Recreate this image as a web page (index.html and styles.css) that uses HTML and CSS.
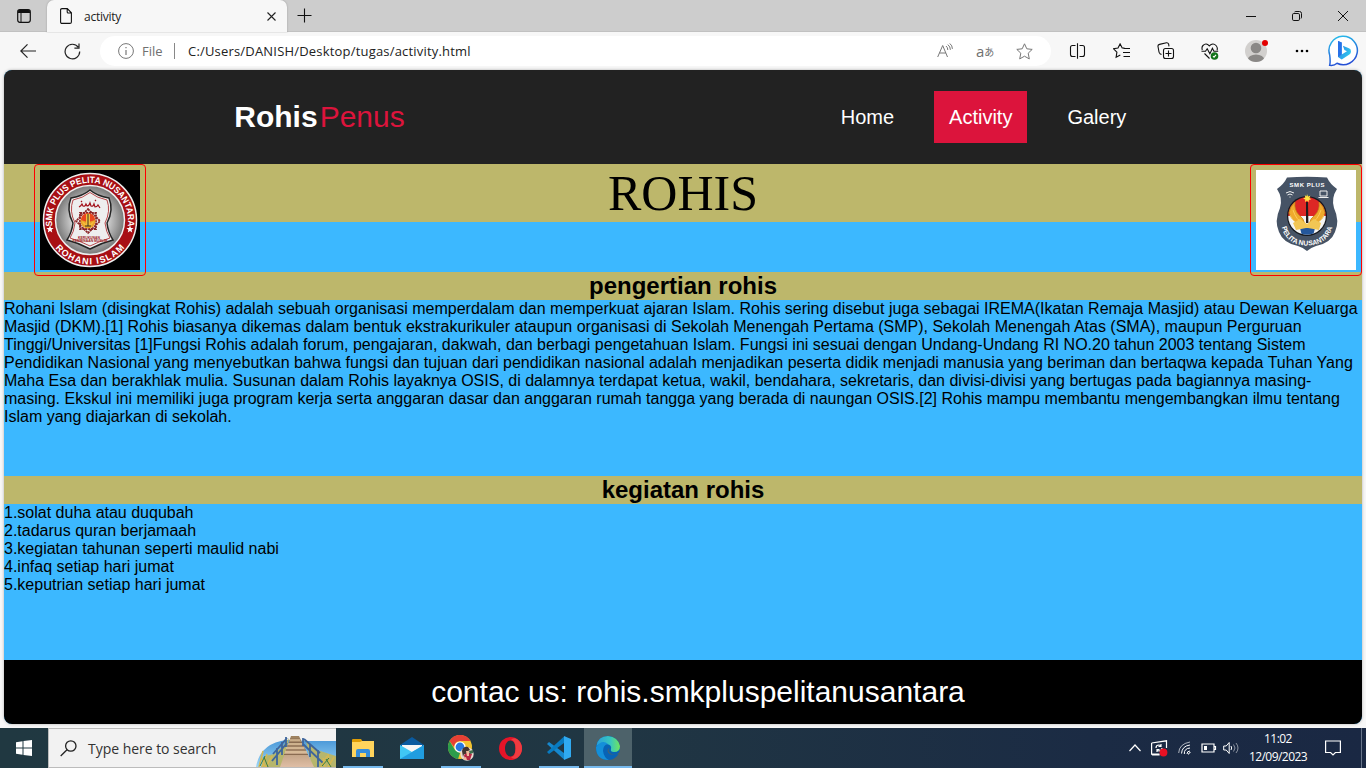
FILE: index.html
```html
<!DOCTYPE html>
<html lang="id">
<head>
<meta charset="utf-8">
<title>activity</title>
<link rel="stylesheet" href="styles.css">
</head>
<body>
<div class="screen">
  <div class="titlebar">
    <svg class="tab-menu" width="14" height="14" viewBox="0 0 14 14"><rect x=".7" y=".7" width="12.6" height="12.6" rx="2.2" fill="none" stroke="#111" stroke-width="1.2"/><path d="M1 4V2.5Q1 1 2.500 1h9Q13 1 13 2.500V4z" fill="#111"/><path d="M4 4v9" stroke="#111"/></svg>
    <div class="tab">
      <svg width="12" height="16" viewBox="0 0 12 16" fill="none" stroke="#111" stroke-width="1.1"><path d="M2 .6h5.300l4.100 4.200v9.100q0 1.500-1.500 1.500H2q-1.400 0-1.400-1.500V2Q.6.6 2 .6zM7.200.8v3.100q0 1.100 1.100 1.100h3"/></svg>
      <span class="tab-title">activity</span>
      <svg width="9" height="9" viewBox="0 0 9 9" stroke="#222" stroke-width="1.1"><path d="M.5.5l8 8M8.500.5l-8 8"/></svg>
    </div>
    <svg class="new-tab" width="15" height="15" viewBox="0 0 15 15" stroke="#111" stroke-width="1.1"><path d="M7.500.5v14M.5 7.500h14"/></svg>
    <div class="window-buttons">
      <svg width="10" height="10" viewBox="0 0 10 10" stroke="#111"><path d="M0 5.500h10"/></svg>
      <svg width="10" height="10" viewBox="0 0 10 10" fill="none" stroke="#111"><rect x=".5" y="2.500" width="7" height="7" rx="1.300"/><path d="M2.500 1Q3 .5 4 .5h3.500Q9.500.5 9.500 2.500V6Q9.500 7 9 7.500"/></svg>
      <svg width="10" height="10" viewBox="0 0 10 10" stroke="#111"><path d="M0 0l10 10M10 0L0 10"/></svg>
    </div>
  </div>

  <div class="toolbar">
    <svg class="back" width="16" height="14" viewBox="0 0 16 14" fill="none" stroke="#222" stroke-width="1.2"><path d="M16 7H.8M7.500.4L.8 7l6.700 6.600"/></svg>
    <svg class="reload" width="17" height="17" viewBox="0 0 17 17" fill="none" stroke="#222" stroke-width="1.2"><path d="M14.200 4.100A7.300 7.300 0 1 0 15.700 8.500M15 .5v4.600h-4.600"/></svg>
    <div class="address">
      <svg width="16" height="16" viewBox="0 0 16 16" fill="none" stroke="#777"><circle cx="8" cy="8" r="7.400"/><path d="M8 7v5M8 4v1.300" stroke-width="1.200"/></svg>
      <span class="scheme">File</span>
      <span class="divider"></span>
      <span class="url">C:/Users/DANISH/Desktop/tugas/activity.html</span>
      <svg class="read" width="17" height="16" viewBox="0 0 17 16" fill="none" stroke="#777"><path d="M.7 14L5.700 2.500l4.800 11.500M2.500 10h6.300M9 3q1.800 1.300 1.800 4M10.800 1.600q2.600 2 2.600 5.200M12.800.5q2.600 2 2.600 5.400"/></svg>
      <span class="translate">a<span>あ</span></span>
      <svg class="star" width="17" height="17" viewBox="0 0 17 17" fill="none" stroke="#777" stroke-linejoin="round"><path d="M8.500.8l2.300 5 5.400.6-4 3.800 1.100 5.700-4.800-2.700-4.800 2.700 1.100-5.700-4-3.800 5.400-.6z"/></svg>
    </div>
    <div class="tools">
      <svg width="18" height="16" viewBox="0 0 18 16" fill="none" stroke="#111" stroke-width="1.100"><path d="M6.500 2.500h-3Q1.500 2.500 1.500 4.500v7q0 2 2 2h3M10.500 2.500h3Q15.500 2.500 15.500 4.500v7q0 2-2 2h-3M8.500.3v15.400"/></svg>
      <svg width="18" height="16" viewBox="0 0 18 16" fill="none" stroke="#111" stroke-width="1.100"><path d="M11.500 5H9.200L7.100.9 5 5.100l-4.400.7 3.300 3.300-.8 5.200 4.200-2.200M10.500 5.500H17M10 9.500h7M10.500 13.500H17"/></svg>
      <svg width="18" height="18" viewBox="0 0 18 18" fill="none" stroke="#111" stroke-width="1.100"><rect x="6.500" y="6.500" width="10" height="10" rx="2"/><path d="M11.500 8.500v6M8.500 11.500h6M4.500 12.500L3 11.700Q2.200 11 2 10L1 4.500Q.7 2.800 2.500 2.400L9.500.8Q11 .6 11.600 2L12 4.300"/></svg>
      <svg width="18" height="17" viewBox="0 0 18 17" fill="none" stroke="#111" stroke-width="1.100"><path d="M1.300 7Q.4 4.200 2 2.500q3.100-3.100 6.300.4Q12-.8 15 2.500q2 2.200 1 4.800M.5 8.300h4l1.700-2.600 2.700 5 2.500-5.500 1.500 3.100h4.300M3.500 10.500l5 5"/><circle cx="13.500" cy="13" r="3.800" fill="#14751b" stroke="none"/><path d="M12 13.200l1 .9 2-2.300" stroke="#fff"/></svg>
      <svg class="profile" width="24" height="24" viewBox="0 0 24 24"><defs><clipPath id="avatar"><circle cx="11" cy="13" r="11"/></clipPath></defs><g clip-path="url(#avatar)"><path fill="#d2d0ce" d="M0 0h24v24H0z"/><circle cx="11" cy="10" r="5.300" fill="#8a8886"/><ellipse cx="11" cy="22" rx="8.300" ry="5.500" fill="#8a8886"/></g><circle cx="20" cy="5" r="3" fill="#e30000"/></svg>
      <svg width="14" height="4" viewBox="0 0 14 4"><circle cx="2" cy="2" r="1.300"/><circle cx="7" cy="2" r="1.300"/><circle cx="12" cy="2" r="1.300"/></svg>
    </div>
    <svg class="bing" width="32" height="32" viewBox="0 0 32 32"><defs><linearGradient id="bb" x1="0" y1="0" x2=".3" y2="1"><stop stop-color="#27c4ec"/><stop offset="1" stop-color="#254fd5"/></linearGradient><linearGradient id="bg" x1="0" y1="0" x2="1" y2=".6"><stop stop-color="#2878e4"/><stop offset="1" stop-color="#32c8ed"/></linearGradient></defs><path d="M1.700 30.300Q2.600 27 1.700 20A14.200 14.200 0 1 1 9 28.300Q6 31 1.700 30.300z" fill="#fff" stroke="url(#bb)" stroke-width="1.500"/><path d="M10 6l3.700 1.400v12.200l5.300-3.300-2.600-1.300-1.500-4.300 6 2.500Q23 13.800 23 16.400q0 2.100-1.600 3.200l-7.700 5L10 22z" fill="url(#bg)"/><path d="M10 6l3.700 1.400v12.200L10 22z" fill="#2871e8"/></svg>
  </div>

  <main class="page">
    <header class="site-header">
      <div class="brand"><b>Rohis</b><span>Penus</span></div>
      <nav><a>Home</a><a class="active">Activity</a><a>Galery</a></nav>
    </header>
    <section class="content">
      <h1>ROHIS</h1>
      <svg class="emblem emblem-left" width="112" height="112" viewBox="-5 -5 110 110">
        <defs>
          <radialGradient id="silver"><stop offset=".35" stop-color="#eee"/><stop offset="1" stop-color="#777"/></radialGradient>
          <path id="arcTop" d="M12.500 57A38 38 0 1 1 87.500 57"/>
          <path id="arcBottom" d="M12 73A44.500 44.500 0 0 0 88 73"/>
        </defs>
        <path d="M0 0h100v100H0z"/>
        <circle cx="50" cy="50" r="46.500" fill="#a80f14" stroke="#eee" stroke-width="1.500"/>
        <circle cx="50" cy="50" r="34.500" fill="url(#silver)" stroke="#eee" stroke-width="1.500"/>
        <path d="M50 20Q57 26 69 28Q74 40 67 53Q68 62 73 70Q61 73 50 79Q39 73 27 70Q32 62 33 53Q26 40 31 28Q43 26 50 20z" fill="#eee" stroke="#242424" stroke-width="1.500"/>
        <path d="M50 22.500Q57 28 67 30Q71 41 65 53Q66 62 70 68Q60 71 50 76Q40 71 30 68Q34 62 35 53Q29 41 33 30Q43 28 50 22.500z" fill="none" stroke="#aa2023" stroke-width=".8"/>
        <path d="M39 37q2-1 3-3l1 2q2 1 3-2l1 2q2 0 3-3l1 3q2 1 3-2l1 3q2 0 3-2l2 3M41 31l1 1M55 30l1 1" fill="none" stroke="#a20e18" stroke-width="1.200"/>
        <g transform="translate(48 51)"><path d="M-8-8H8V8H-8zM0-12L12 0 0 12-12 0z" fill="none" stroke="#8b2528" stroke-width="1.800" stroke-dasharray="2.200 .7"/><path d="M-6-6H6V6H-6z" fill="#d7b9b4"/><circle r="7.500" fill="#e9a22a"/><path d="M-7-1A7 7 0 0 1 7-1L1 1 0-9-1 1z" fill="#e94520"/><path d="M-6 0Q-5 5 0 5T6 0L2 3V-7H-2V3z" fill="#f5be3e"/><path d="M0-7V5M-3 5h6" stroke="#332" stroke-width="1"/></g>
        <text x="49" y="68.500" class="seal-small">KERUKUNAN</text><text x="50" y="72" class="seal-small">PEMBINAAN MUSLIM</text>
        <text class="seal-text" fill="#fff"><textPath href="#arcTop" startOffset="50%" text-anchor="middle" textLength="130" lengthAdjust="spacingAndGlyphs">SMK PLUS PELITA NUSANTARA</textPath></text>
        <text class="seal-text" fill="#fff"><textPath href="#arcBottom" startOffset="50%" text-anchor="middle" textLength="79" lengthAdjust="spacing">ROHANI ISLAM</textPath></text>
        <path id="whiteStar" d="M10 55.500l1 2.400 2.600.2-2 1.700.6 2.600-2.200-1.400-2.200 1.400.6-2.600-2-1.700 2.600-.2z" fill="#fff"/>
        <use href="#whiteStar" x="80"/>
      </svg>
      <svg class="emblem emblem-right" width="112" height="112" viewBox="-5 -5 110 110">
        <defs><clipPath id="disc"><circle cx="51" cy="46" r="18.800"/></clipPath><path id="shieldArc" d="M25 54Q29 75.500 51 75.500T77 54"/></defs>
        <path d="M0 0h100v100H0z" fill="#fff"/>
        <path d="M31 7.500Q51 6 71 7.500Q74 14 81 19Q75 28 78 38Q84 51 79 62Q75 73 60 76Q54 78 51 81Q48 78 42 76Q27 73 23 62Q18 51 24 38Q27 28 21 19Q28 14 31 7.500z" fill="#465365"/>
        <text x="51" y="17" text-anchor="middle" textLength="35" class="shield-top">SMK PLUS</text>
        <g fill="none" stroke="#eee" stroke-width="1"><path d="M30 23q4-3 8 0M31.500 25q2.500-2 5 0M33.500 27h1M64 21h7v5h-7zM62.500 27.500h10"/></g>
        <circle cx="51" cy="46" r="20" fill="#16191f"/>
        <g clip-path="url(#disc)"><path d="M30 25h42v21H30z" fill="#dd2725"/><path d="M30 46h42v22H30z" fill="#f4f4f4"/><path d="M44 58h15l-2 8H46z" fill="#24579b"/></g>
        <path d="M49 55Q37 54 33 43Q34 36 39 32Q38 40 43 45Q48 48 49 55zM53 55Q65 54 69 43Q68 36 63 32Q64 40 59 45Q54 48 53 55z" fill="#efaa2c" stroke="#bd7f19" stroke-width=".7"/>
        <path d="M34 45q4 10 16 10M68 45q-4 10-16 10M37 40q3 10 11 14M65 40q-3 10-11 14" fill="none" stroke="#ffd464" stroke-width=".8"/>
        <path d="M37 53l7-4 7 5 7-5 7 4-2 7-11-2-2 0-10 2z" fill="#f2c654"/>
        <path d="M50 32h2l.4 21H50z" fill="#211b1b"/><path d="M51 24l1 2.400 2.400-.6-1 2.200 2 1.300-2.600.6-.2 2.300-1.600-1.600-2 1.300.3-2.500-2.300-.9 2.300-1-.5-2.200 1.800 1z" fill="#ffe443"/>
        <text class="shield-text" fill="#fff"><textPath href="#shieldArc" startOffset="50%" text-anchor="middle" textLength="68" lengthAdjust="spacingAndGlyphs">PELITA NUSANTARA</textPath></text>
      </svg>
      <h2>pengertian rohis</h2>
      <p class="about">Rohani Islam (disingkat Rohis) adalah sebuah organisasi memperdalam dan memperkuat ajaran Islam. Rohis sering disebut juga sebagai IREMA(Ikatan Remaja Masjid) atau Dewan Keluarga<br>Masjid (DKM).[1] Rohis biasanya dikemas dalam bentuk ekstrakurikuler ataupun organisasi di Sekolah Menengah Pertama (SMP), Sekolah Menengah Atas (SMA), maupun Perguruan<br>Tinggi/Universitas [1]Fungsi Rohis adalah forum, pengajaran, dakwah, dan berbagi pengetahuan Islam. Fungsi ini sesuai dengan Undang-Undang RI NO.20 tahun 2003 tentang Sistem<br>Pendidikan Nasional yang menyebutkan bahwa fungsi dan tujuan dari pendidikan nasional adalah menjadikan peserta didik menjadi manusia yang beriman dan bertaqwa kepada Tuhan Yang<br>Maha Esa dan berakhlak mulia. Susunan dalam Rohis layaknya OSIS, di dalamnya terdapat ketua, wakil, bendahara, sekretaris, dan divisi-divisi yang bertugas pada bagiannya masing-<br>masing. Ekskul ini memiliki juga program kerja serta anggaran dasar dan anggaran rumah tangga yang berada di naungan OSIS.[2] Rohis mampu membantu mengembangkan ilmu tentang<br>Islam yang diajarkan di sekolah.</p>
      <h2>kegiatan rohis</h2>
      <p class="activities">1.solat duha atau duqubah<br>2.tadarus quran berjamaah<br>3.kegiatan tahunan seperti maulid nabi<br>4.infaq setiap hari jumat<br>5.keputrian setiap hari jumat</p>
    </section>
    <footer>contac us: rohis.smkpluspelitanusantara</footer>
  </main>

  <div class="taskbar">
    <div class="start"><svg width="16" height="16" viewBox="0 0 16 16" fill="#fff"><path d="M0 2.200l6.500-.9v6.200H0zM7.500 1.100L16 0v7.500H7.500zM0 8.500h6.500v6.200L0 13.800zM7.500 8.500H16V16l-8.500-1.100z"/></svg></div>
    <div class="search">
      <svg width="17" height="17" viewBox="0 0 17 17" fill="none" stroke="#222" stroke-width="1.300"><circle cx="10.800" cy="6" r="5.200"/><path d="M7 9.800L.7 16"/></svg>
      <span>Type here to search</span>
      <svg class="bridge" width="80" height="31" viewBox="0 0 80 31">
        <defs><linearGradient id="water" x2="0" y2="1"><stop stop-color="#4a98d8"/><stop offset="1" stop-color="#9dd6f5"/></linearGradient><linearGradient id="wood" x2="0" y2="1"><stop stop-color="#9c805d"/><stop offset="1" stop-color="#dfbea5"/></linearGradient></defs>
        <path d="M0 31Q4 7 31 4L50 5H80V31z" fill="url(#water)"/>
        <path d="M5 31L9 20 18 18 27 10 33 2 27 31zM50 5L61 14 80 20V31H56z" fill="#b6b66c"/>
        <path d="M35 0H43L58 31H24z" fill="url(#wood)"/>
        <path d="M34 3h10M33 6.500h13M31 10h17M30 14h20M28 18.500h24" stroke="#8a6c51" stroke-width="1"/>
        <path d="M34 4h10M32 8h15M30 12h18M29 16h22" stroke="#efd4ac"/>
        <path d="M31 2L17 18M31 7L16 25M30 1v10M26 6v13M21 12v17M48 3L64 17M47 8L67 27M47 2v8M54 8v13M62 14v17" fill="none" stroke="#3e659b" stroke-width="1.800"/>
        <path d="M3 31L7 15M6 31L11 18M9 31L5 20M10 31L16 20M65 31L71 20M69 31L67 22M72 31L78 21M74 31L72 18" stroke="#d7b84f" stroke-width="1.500"/>
        <path d="M4 30L9 20M12 31L8 21M66 30L73 22M75 31L70 23" stroke="#397b43"/>
      </svg>
    </div>
    <div class="apps">
      <div class="app open"><svg width="22" height="19" viewBox="0 0 22 19"><path d="M0 1q0-1 1-1h8l2 3H0z" fill="#df9d06"/><path d="M0 3h8l2-1h12v16H0z" fill="#ffd45c"/><path d="M4 18v-6q0-2 2-2h10q2 0 2 2v6h-4v-4H8v4z" fill="#368dda"/></svg></div>
      <div class="app"><svg width="24" height="22" viewBox="0 0 24 22"><path d="M0 8L12 0l12 8v3H0z" fill="#0a5a9f"/><path d="M2 8h20v7H2z" fill="#f5f5f5"/><path d="M0 8l12 7 12-7v14H0z" fill="#40c7f4"/><path d="M0 22L24 8v14z" fill="#209de0"/></svg></div>
      <div class="app open"><svg width="26" height="26" viewBox="0 0 26 26"><circle cx="12" cy="12" r="12" fill="#f3c32f"/><path d="M1.600 6A12 12 0 0 1 22.500 6H12q-5 0-6 6z" fill="#e64035"/><path d="M1.600 6L7 15l5 3-2 6A12 12 0 0 1 1.600 6z" fill="#2c9c4b"/><circle cx="12" cy="12" r="5.600" fill="#fff"/><circle cx="12" cy="12" r="4.400" fill="#2879e0"/><circle cx="19" cy="19" r="6.700" fill="#eadbd0"/><path d="M14 16q1-5 6-4l2 3-2 1-1 4-3-1-1 3z" fill="#44332f"/><path d="M16 20l4-3 4 2-2 6h-5z" fill="#b82643"/><path d="M18 16h3v5h-2zM15 23l3-1 1 3h-3z" fill="#efb99d"/><path d="M21 16l4-1v3l-3 1z" fill="#40714c"/></svg></div>
      <div class="app"><svg width="23" height="23" viewBox="0 0 23 23"><path d="M11.500 0a11.500 11.500 0 1 0 0 23 11.500 11.500 0 1 0 0-23zM11.500 3.500c3.500 0 5 4 5 8s-1.500 8-5 8-5.500-4-5.500-8 2-8 5.500-8z" fill="#e51428" fill-rule="evenodd"/><path d="M12 3q2-3 6-1 5 3.500 5 9.500t-5 9.500q-4 2-6-1 4.500 0 4.500-8.500T12 3z" fill="#f03b40"/></svg></div>
      <div class="app open"><svg width="24" height="24" viewBox="0 0 24 24"><path d="M2 6L0 8l17 15.500V17z" fill="#1688ce"/><path d="M2 18L0 16 17 .5V7z" fill="#087bc1"/><path d="M17 0l7 3v18l-7 3V0z" fill="#30aaf1"/></svg></div>
      <div class="app open current"><svg width="24" height="24" viewBox="0 0 24 24"><defs><linearGradient id="edge"><stop stop-color="#299fdb"/><stop offset=".6" stop-color="#38c7bd"/><stop offset="1" stop-color="#71e55c"/></linearGradient></defs><circle cx="12" cy="12" r="12" fill="#0863b5"/><path d="M.5 10Q2 0 12 0q10 1 12 10 0 6-6 6-4 0-3-3 1-4-4-5Q5 6 .5 10z" fill="url(#edge)"/><path d="M0 11Q6 3 12 8q-5 1-5 7 1 7 6 9Q0 24 0 11z" fill="#148fd9"/><path d="M14 12q-3 2 0 5 4 3 8.500 0l1.500-2v3h-2q-2 .8-4.500.8-6 0-6-4.800 .6-1.600 2.500-2z" fill="#4d626a"/></svg></div>
    </div>
    <div class="tray">
      <svg width="12" height="8" viewBox="0 0 12 8" fill="none" stroke="#fff" stroke-width="1.200"><path d="M.5 7L6 1l5.500 6"/></svg>
      <svg class="sync" width="17" height="17" viewBox="0 0 17 17" fill="none" stroke="#fff" stroke-width="1.200"><path d="M.6 3L15.500.8V8M.6 3v11h8M.6 14l1 1h7"/><path d="M5 8q0-3 3-3l2 .8M10 4v2.500H7.500M11 8q0 3-3 3l-2-.8M6 12V9.500h2.500"/><circle cx="12.500" cy="12.500" r="3.900" fill="#e81123" stroke="none"/></svg>
      <svg class="wifi" width="14" height="14" viewBox="0 0 14 14" fill="none" stroke="#fff"><path d="M.7 12Q1 3 12 1" opacity=".65"/><path d="M3.500 12.500Q4 5 12 4M6.300 13Q6 7.500 12 7M9 13q0-3 3-3M10.500 13.500q0-2 2-2"/></svg>
      <svg class="battery" width="16" height="10" viewBox="0 0 16 10" fill="none" stroke="#fff" stroke-width="1.200"><path d="M1 1h12v8H1zM13 3.500h1.500v3H13"/><path d="M3 3h3v4H3z" fill="#fff" stroke="none"/></svg>
      <svg class="volume" width="17" height="14" viewBox="0 0 17 14" fill="none" stroke="#fff"><path d="M.7 5h2.500l3-3.500v11l-3-3.500H.7zM8 5q1.300 2 0 4"/><path d="M10.500 3.500q3 3.500 0 7M13 2q4 5 0 10" opacity=".5"/></svg>
      <div class="clock">11:02<br><span>12/09/2023</span></div>
      <svg class="notice" width="16" height="17" viewBox="0 0 16 17" fill="none" stroke="#fff" stroke-width="1.200"><path d="M.6 1h14.800v11.500h-5L8 15l-2.400-2.500h-5z"/></svg>
      <span class="desktop-edge"></span>
    </div>
  </div>
</div>
</body>
</html>
```
FILE: styles.css
```css
* { box-sizing: border-box; }
body { margin: 0; }
svg { display: block; flex: none; }
.screen { width: 1366px; height: 768px; overflow: hidden; display: flex; flex-direction: column; background: #f7f7f7; font-family: "Open Sans", "Noto Sans", sans-serif; }
.titlebar { height: 32px; display: flex; align-items: center; background: #cdcdcd; border-bottom: 1px solid #c1c1c1; }
.tab-menu { margin-left: 17px; }
.tab { width: 240px; height: 33px; margin: 0 0 -1px 16px; padding: 0 11px 0 13px; display: flex; align-items: center; background: #f7f7f7; border-radius: 7px 7px 0 0; box-shadow: 0 0 2px #999; clip-path: inset(0 -3px 0 -3px); }
.tab-title { margin-left: 12px; flex: 1; font-size: 12px; letter-spacing: -.25px; color: #222; }
.new-tab { margin-left: 10px; }
.window-buttons { display: flex; gap: 36px; margin-left: auto; margin-right: 18px; }
.toolbar { height: 38px; display: flex; align-items: center; background: #f7f7f7; }
.back { margin-left: 20px; }
.reload { margin-left: 28px; }
.address { width: 951px; height: 30px; margin-left: 19px; display: flex; align-items: center; border-radius: 15px; background: #fff; padding-left: 18px; font-size: 13px; }
.scheme { width: 32px; margin-left: 8px; color: #707070; }
.divider { width: 1px; height: 16px; background: #888; }
.url { width: 283px; margin-left: 13px; color: #222; white-space: nowrap; letter-spacing: .19px; }
.read { margin-left: 466px; }
.translate { width: 18px; margin-left: 22px; color: #707070; font-size: 15px; line-height: 18px; display: flex; align-items: center; }
.translate span { font: 10px "Noto Sans CJK JP", sans-serif; }
.star { margin-left: 22px; }
.tools { display: flex; align-items: center; gap: 26px; margin-left: 18px; }
.profile { margin: -2px -1px 0 0; }
.tools svg:last-child { margin-left: 1px; }
.bing { margin-left: 19px; }
.page { width: 1358px; height: 654px; margin-left: 4px; border-radius: 8px; overflow: hidden; background: #3cb8ff; color: #000; font-family: "Liberation Sans", Arial, sans-serif; box-shadow: 0 0 3px #aaa; }
.site-header { height: 94px; padding: 0 220.7px 0 230.3px; display: flex; align-items: center; justify-content: space-between; background: #222; color: #fff; }
.brand { font-size: 30px; display: flex; gap: 2px; }
.brand span { color: #dc143c; }
nav { display: flex; gap: 25px; font-size: 20px; }
nav a { height: 52px; padding: 0 15px; line-height: 52px; }
nav .active { background: #dc143c; }
.content { position: relative; height: 496px; }
h1, h2, p { margin: 0; }
h1 { height: 58px; background: #bdb76b; font: 50px/58px "Liberation Serif", "Times New Roman", serif; text-align: center; margin-bottom: 50px; }
h2 { height: 28px; background: #bdb76b; font-size: 24px; line-height: 28px; text-align: center; }
p { font-size: 16px; line-height: 18px; white-space: nowrap; }
.about { height: 176px; }
.emblem { position: absolute; top: 0; border: 1px solid red; border-radius: 4px; }
.emblem-left { left: 30px; }
.emblem-right { right: 0; }
.seal-text { font: bold 9px "Liberation Sans", sans-serif; }
.seal-small { font: bold 3.4px "Liberation Sans", sans-serif; fill: #9d2022; text-anchor: middle; }
.shield-top { font: bold 6px "Liberation Sans", sans-serif; fill: #fff; }
.shield-text { font: bold 7px "Liberation Sans", sans-serif; }
footer { height: 64px; padding-left: 30px; background: #000; color: #fff; font-size: 30px; line-height: 64px; text-align: center; }
.taskbar { height: 40px; margin-top: 4px; display: flex; background: linear-gradient(90deg, #203841, #203643 45%, #1b2b44 80%, #1a2843); }
.start { width: 48px; display: grid; place-items: center; }
.search { width: 288px; display: flex; align-items: center; padding-left: 11px; background: #f2f2f2; border: 1px solid #bcbcbc; border-right: 0; color: #333; font-size: 14px; }
.search > span { width: 130px; margin-left: 11px; letter-spacing: -.03px; white-space: nowrap; }
.bridge { margin-left: auto; align-self: flex-end; }
.apps { display: flex; gap: 1px; }
.app { width: 48px; display: grid; place-items: center; padding-left: 6px; }
.app.open { background: linear-gradient(#76b9ed, #76b9ed) 7px 100% / 40px 2px no-repeat; }
.app.current { margin-left: 3px; padding-left: 0; background: linear-gradient(#76b9ed, #76b9ed) 0 100% / 100% 2px no-repeat, #4d626a; }
.tray { display: flex; align-items: center; margin-left: auto; color: #fff; }
.sync { margin-left: 10px; }
.wifi { margin-left: 10px; }
.battery { margin-left: 9px; }
.volume { margin-left: 6px; }
.clock { width: 68px; margin-left: 4px; text-align: center; font-size: 12px; line-height: 18px; letter-spacing: -.55px; }
.notice { margin-left: 13px; }
.desktop-edge { width: 1px; height: 40px; background: #68758a; margin: 0 4px 0 20px; }
```
